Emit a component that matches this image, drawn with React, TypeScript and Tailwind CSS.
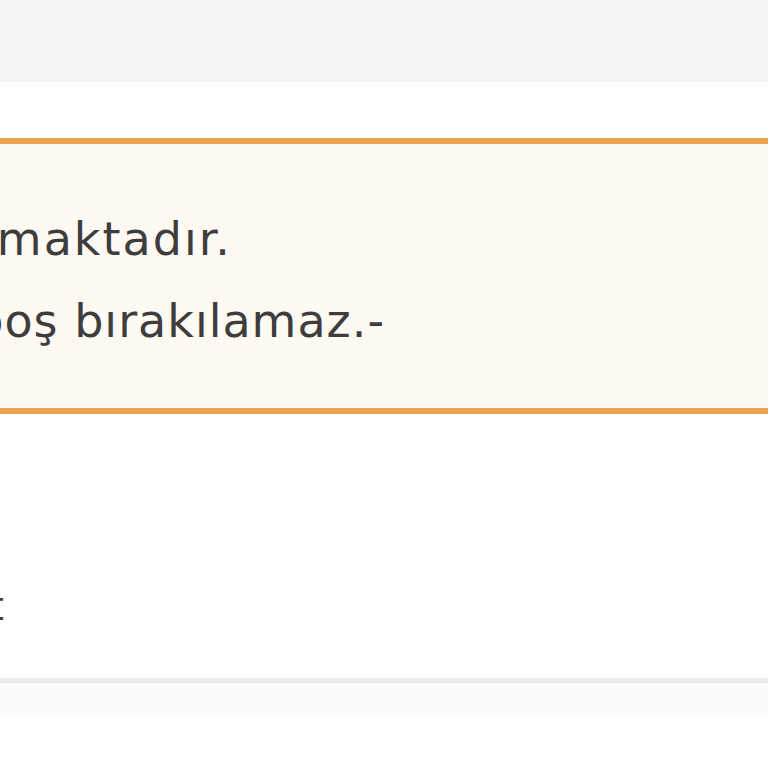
export default function App() {
  return (
    <main className="h-[768px] w-[768px] overflow-hidden bg-white font-['DejaVu_Sans',sans-serif] text-[#3d3d3d]">
      <div className="h-[82px] bg-[#f3f4f6]" />
      <div className="pt-[56px]">
        <AlertBox />
      </div>
      <div className="flex h-[269px] flex-col justify-between">
        <div className="mt-[172px] flex w-[4px] justify-end">
          <span className="whitespace-nowrap text-[40px] leading-none">Kayıt</span>
        </div>
        <div className="h-[5px] bg-[#ebebeb]" />
      </div>
      <div className="h-[32px] bg-[#fcfcfc]" />
    </main>
  );
}

function AlertBox() {
  return (
    <div className="h-[276px] border-y-[6px] border-[#eca44f] bg-[#fef9f2] pt-[54px]">
      <div className="flex w-[232px] justify-end">
        <p className="whitespace-nowrap text-[46px] leading-[82px] tracking-[2px]">Bu alan sağlanmaktadır.</p>
      </div>
      <div className="flex w-[385px] justify-end">
        <p className="whitespace-nowrap text-[46px] leading-[82px] tracking-[1px]">Ad alanı boş bırakılamaz.-</p>
      </div>
    </div>
  );
}
